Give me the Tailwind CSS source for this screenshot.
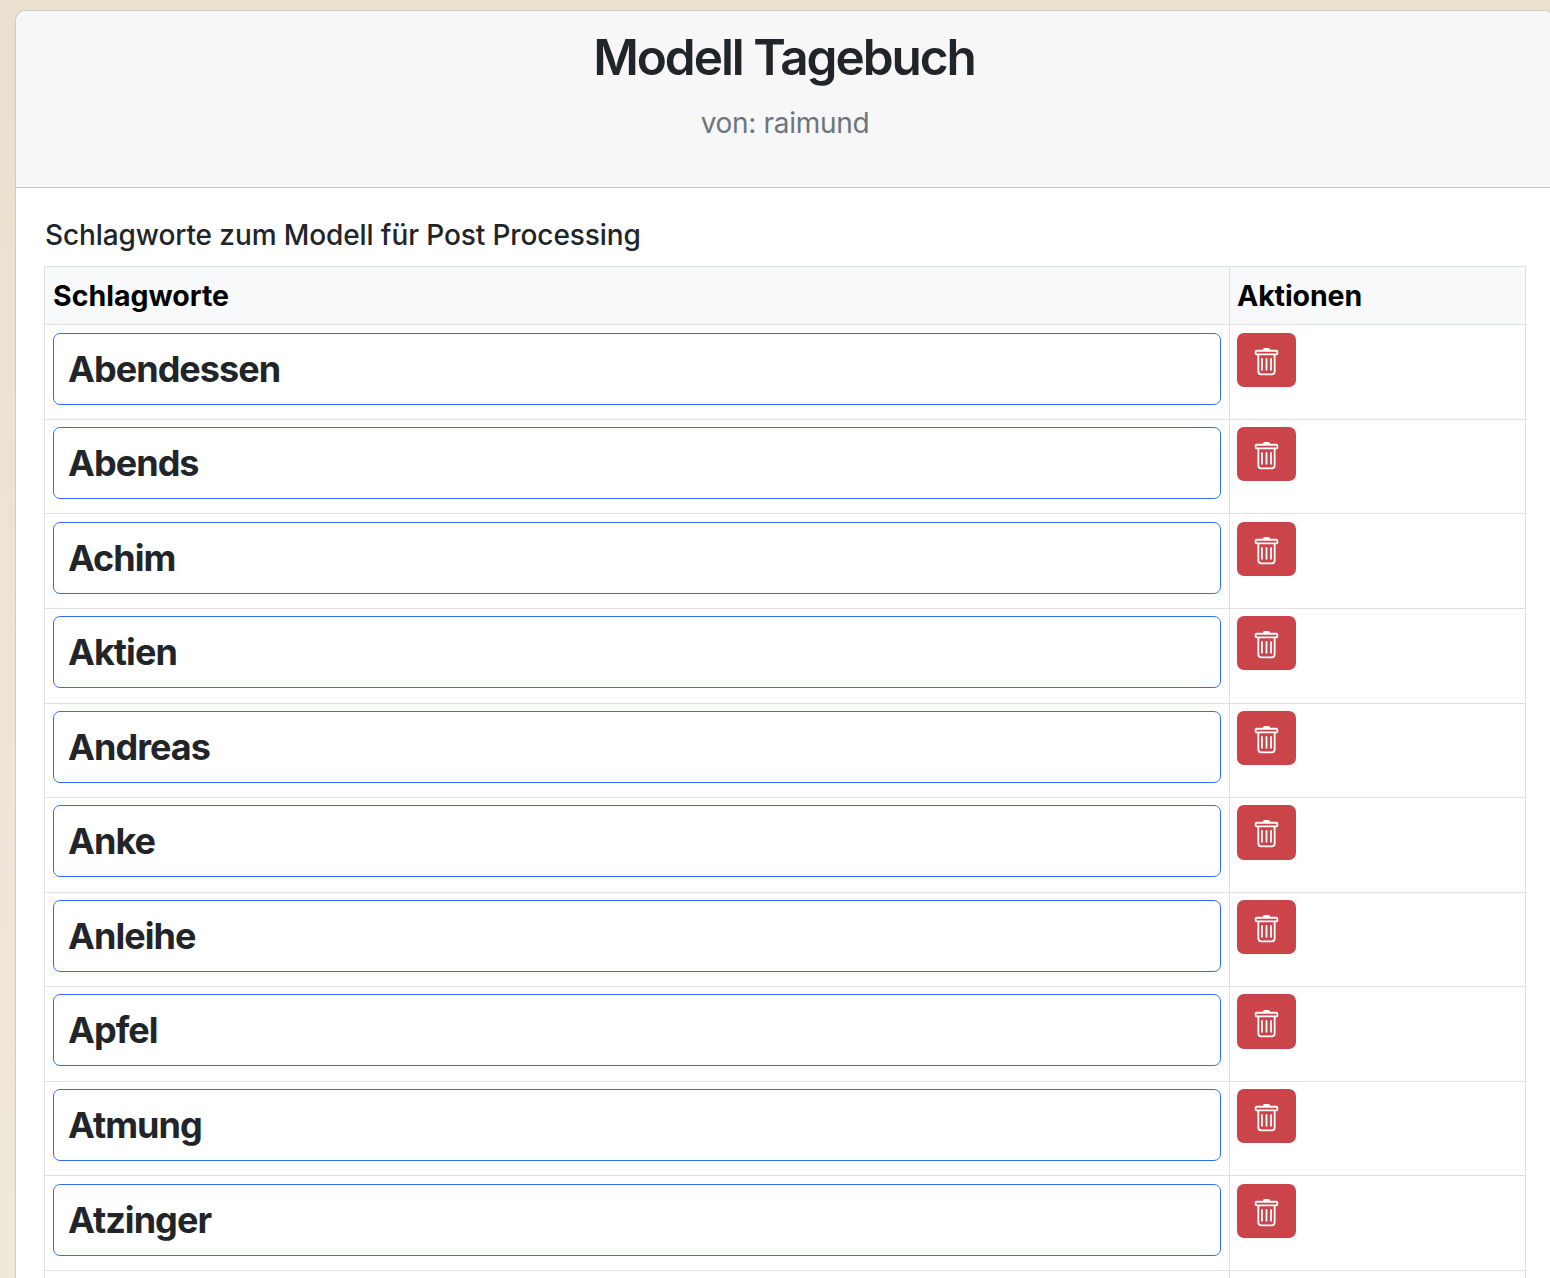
<!DOCTYPE html>
<html lang="de">
<head>
  <meta charset="UTF-8" />
  <meta name="viewport" content="width=device-width, initial-scale=1.0" />
  <title>Modell Tagebuch</title>
  <script src="https://cdn.jsdelivr.net/npm/@tailwindcss/browser@4"></script>
</head>
<body class="h-[1278px] overflow-hidden bg-linear-to-b from-[#eae0d0] to-[#f1e8dc] pt-[10px] pl-[15px] font-['Inter',sans-serif] text-[#212529]">

  <!-- Card -->
  <div class="w-[1540px] h-[1268px] bg-white border border-b-0 border-[#cbcbca] rounded-t-[11px] overflow-hidden">

    <!-- Header -->
    <header class="h-[177px] bg-[#f7f7f7] border-b border-[#c8c8c8] text-center pt-[16px]">
      <h1 class="pr-[2px] text-[49.5px] leading-[60px] font-[560] tracking-[-2.05px]">Modell Tagebuch</h1>
      <p class="mt-[15px] text-[28px] leading-[42px] text-[#6c757d] tracking-[-0.3px]">von: raimund</p>
    </header>

    <main class="w-[1482px] ml-[28px] pt-[30px]">
      <h2 class="h-[48px] pl-[1px] text-[28px] leading-[34px] font-medium tracking-[-0.1px]">Schlagworte zum Modell für Post Processing</h2>

      <!-- Keywords -->
      <div class="border border-b-0 border-[#dee0e3]">
        <div class="flex h-[57.35px] bg-[#f8f9fb] text-[28.5px] leading-[58px] font-bold text-black">
          <div class="w-[1185px] pl-[8px] border-r border-[#dee0e3]">Schlagworte</div>
          <div class="pl-[7px] tracking-[-0.1px]">Aktionen</div>
        </div>
        <div id="rows"></div>
        <div class="h-[8px] border-t border-[#dee0e3]">
          <div class="w-[1185px] h-full border-r border-[#dee0e3]"></div>
        </div>
      </div>
    </main>
  </div>

  <template id="row">
    <div class="flex h-[94.55px] border-t border-[#dee0e3]">
      <div class="w-[1185px] border-r border-[#dee0e3] px-[8px] pt-[7.25px]">
        <div class="word h-[72px] border border-[#2f6fed] rounded-[7px] pl-[14px] text-[36px] leading-[71px] font-bold tracking-[-0.95px]"></div>
      </div>
      <div class="pl-[7px] pt-[7.25px]">
        <button class="flex items-center justify-center w-[59px] h-[54.2px] rounded-[7px] bg-[#ca444a] text-white" aria-label="Löschen">
          <svg class="w-[29px] h-[29px] mt-[5px]" viewBox="0 0 16 16" fill="currentColor">
            <path d="M5.5 5.5A.5.5 0 0 1 6 6v6a.5.5 0 0 1-1 0V6a.5.5 0 0 1 .5-.5m2.5 0a.5.5 0 0 1 .5.5v6a.5.5 0 0 1-1 0V6a.5.5 0 0 1 .5-.5m3 .5a.5.5 0 0 0-1 0v6a.5.5 0 0 0 1 0z" />
            <path d="M14.5 3a1 1 0 0 1-1 1H13v9a2 2 0 0 1-2 2H5a2 2 0 0 1-2-2V4h-.5a1 1 0 0 1-1-1V2a1 1 0 0 1 1-1H6a1 1 0 0 1 1-1h2a1 1 0 0 1 1 1h3.5a1 1 0 0 1 1 1zM4.118 4 4 4.059V13a1 1 0 0 0 1 1h6a1 1 0 0 0 1-1V4.059L11.882 4zM2.500 3h11V2h-11z" />
          </svg>
        </button>
      </div>
    </div>
  </template>

  <script>
    const words = ['Abendessen', 'Abends', 'Achim', 'Aktien', 'Andreas', 'Anke', 'Anleihe', 'Apfel', 'Atmung', 'Atzinger'];
    const rows = document.getElementById('rows');
    const template = document.getElementById('row');
    words.forEach(word => {
      const row = template.content.cloneNode(true);
      row.querySelector('.word').textContent = word;
      rows.appendChild(row);
    });
  </script>
</body>
</html>
